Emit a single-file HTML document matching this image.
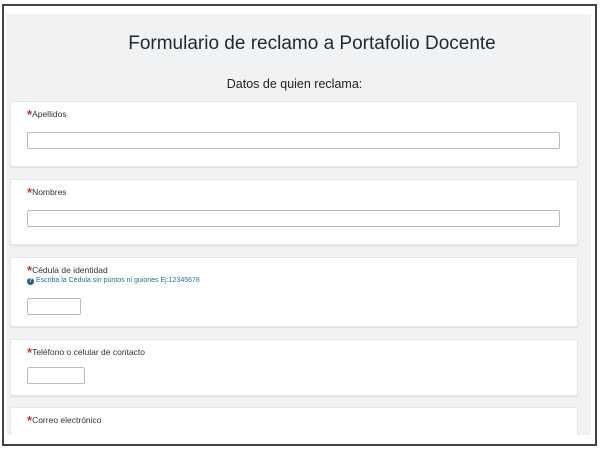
<!DOCTYPE html>
<html><head><style>
*{margin:0;padding:0;box-sizing:border-box}
body{width:600px;height:450px;background:#fff;position:relative;overflow:hidden;font-family:"Liberation Sans","DejaVu Sans",sans-serif}
.frame{position:absolute;left:2px;top:4px;width:595px;height:442px;border:2px solid #444;background:#fff}
.gray{position:absolute;left:6px;top:14px;width:585px;height:421px;background:#f1f2f4;overflow:hidden}
h1{position:absolute;left:0;width:612px;top:19px;text-align:center;font-weight:normal;font-size:19px;color:#1f2a30}
h2{position:absolute;left:0;width:577px;top:63px;text-align:center;font-weight:normal;font-size:12.5px;color:#222}
.card{position:absolute;left:4px;width:568px;background:#fff;border:1px solid #e6e7ea;box-shadow:0 1px 1px #ddd}
.lab{position:absolute;left:16px;top:3px;font-size:8.5px;color:#333}
.lab b{color:#c8323c;font-size:13px;font-weight:bold;position:relative;top:2px}
.in{position:absolute;left:16px;height:17px;border:1px solid #bbb;border-radius:2px;background:#fff}
.hint{position:absolute;left:16px;top:19px;font-size:7px;color:#2a6f9a}
.hint span{display:inline-block;width:7px;height:7px;border-radius:50%;background:#1f5f8c;color:#fff;font-size:6px;text-align:center;line-height:7px;font-weight:bold}
</style></head><body>
<div class="frame"></div>
<div class="gray">
<h1>Formulario de reclamo a Portafolio Docente</h1>
<h2>Datos de quien reclama:</h2>
<div class="card" style="top:87px;height:66px"><div class="lab"><b>*</b>Apellidos</div><div class="in" style="top:30px;width:533px"></div></div>
<div class="card" style="top:165px;height:66px"><div class="lab"><b>*</b>Nombres</div><div class="in" style="top:30px;width:533px"></div></div>
<div class="card" style="top:243px;height:70px"><div class="lab"><b>*</b>Cédula de identidad</div><div class="hint"><span>?</span> Escriba la Cédula sin puntos ni guiones Ej:12345678</div><div class="in" style="top:40px;width:54px"></div></div>
<div class="card" style="top:325px;height:57px"><div class="lab"><b>*</b>Teléfono o celular de contacto</div><div class="in" style="top:27px;width:58px"></div></div>
<div class="card" style="top:393px;height:40px"><div class="lab"><b>*</b>Correo electrónico</div></div>
</div>
</body></html>
